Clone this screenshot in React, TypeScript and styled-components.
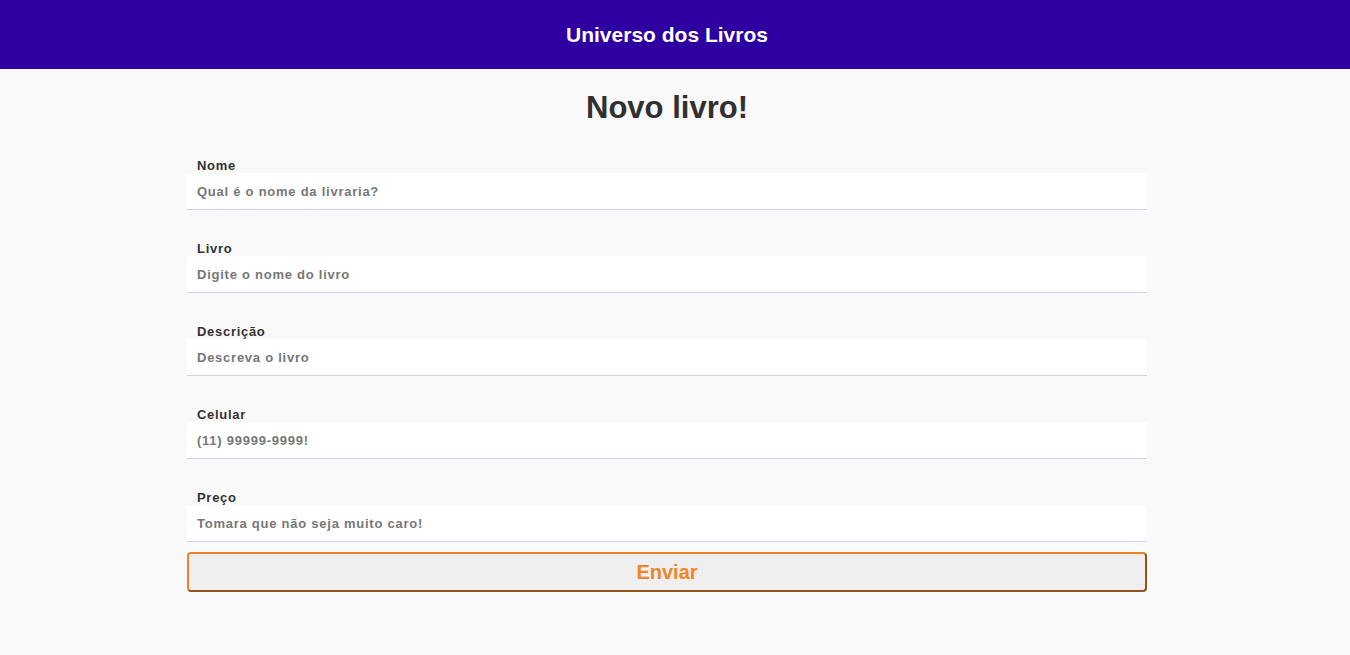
import styled, { createGlobalStyle } from 'styled-components';

const GlobalStyle = createGlobalStyle`
  * {
    box-sizing: border-box;
  }

  body {
    margin: 0;
    background: #f9f9f9;
    font-family: 'Liberation Sans', Arial, sans-serif;
  }
`;

type Field = {
  readonly id: string;
  readonly label: string;
  readonly placeholder: string;
};

const fields: readonly Field[] = [
  { id: 'nome', label: 'Nome', placeholder: 'Qual é o nome da livraria?' },
  { id: 'livro', label: 'Livro', placeholder: 'Digite o nome do livro' },
  { id: 'descricao', label: 'Descrição', placeholder: 'Descreva o livro' },
  { id: 'celular', label: 'Celular', placeholder: '(11) 99999-9999!' },
  { id: 'preco', label: 'Preço', placeholder: 'Tomara que não seja muito caro!' },
];

export default function App() {
  return (
    <>
      <GlobalStyle />
      <Header>
        <HeaderTitle>Universo dos Livros</HeaderTitle>
      </Header>
      <Main>
        <Content>
          <PageTitle>Novo livro!</PageTitle>
          <Form onSubmit={(e) => e.preventDefault()}>
            {fields.map((field) => (
              <FieldGroup key={field.id}>
                <Label htmlFor={field.id}>{field.label}</Label>
                <Input id={field.id} placeholder={field.placeholder} />
              </FieldGroup>
            ))}
            <SubmitButton type="submit">Enviar</SubmitButton>
          </Form>
        </Content>
      </Main>
    </>
  );
}

// the original sits left of the middle because of its scrollbar gutter
const Header = styled.header`
  display: flex;
  align-items: center;
  justify-content: center;
  height: 69px;
  padding-right: 16px;
  background: #2e00a2;
`;

const HeaderTitle = styled.h1`
  margin: 1px 0 0;
  color: #ffffff;
  font-size: 21px;
  font-weight: 700;
`;

const Main = styled.main`
  padding: 0 16px 90px 0;
`;

const Content = styled.div`
  width: 960px;
  margin: 0 auto;
`;

const PageTitle = styled.h2`
  margin: 21px 0 32px;
  text-align: center;
  color: #303030;
  font-size: 31px;
  font-weight: 700;
  line-height: 36px;
`;

const Form = styled.form`
  display: flex;
  flex-direction: column;
`;

const FieldGroup = styled.div`
  display: flex;
  flex-direction: column;
  margin-bottom: 31px;

  &:last-of-type {
    margin-bottom: 10px;
  }
`;

const Label = styled.label`
  padding-left: 10px;
  color: #333333;
  font-size: 13px;
  font-weight: 700;
  letter-spacing: 0.7px;
  line-height: 15px;
`;

const Input = styled.input`
  height: 37px;
  padding: 0 10px;
  border: none;
  border-bottom: 1px solid #d6cdee;
  background: #ffffff;
  color: #333333;
  font-family: inherit;
  font-size: 13px;
  font-weight: 700;
  letter-spacing: 0.75px;
  outline: none;

  &::placeholder {
    color: #777777;
  }
`;

const SubmitButton = styled.button`
  height: 40px;
  border: 2px outset #e8832a;
  border-radius: 4px;
  background: #efefef;
  color: #ee8526;
  font-family: inherit;
  font-size: 20px;
  font-weight: 700;
  cursor: pointer;
`;
